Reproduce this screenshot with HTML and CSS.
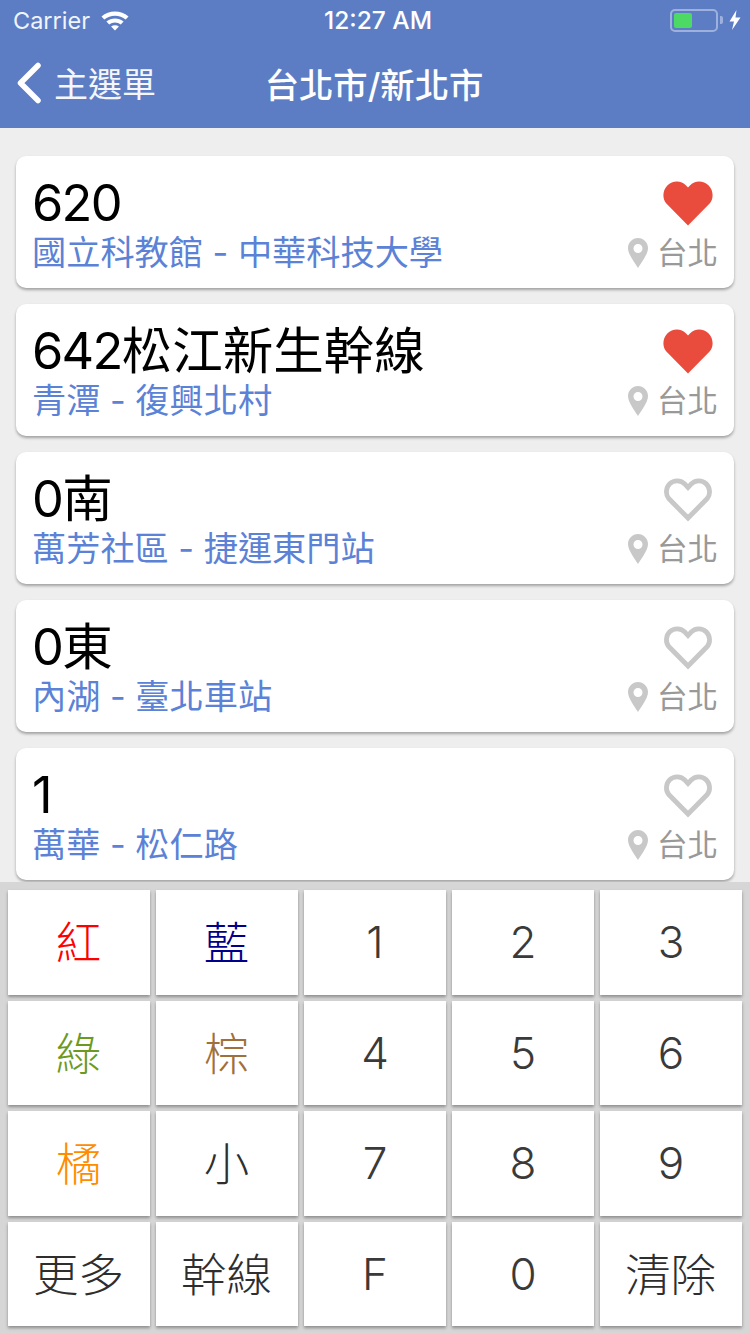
FILE: index.html
```html
<!DOCTYPE html>
<html lang="zh-Hant">
<head>
<meta charset="utf-8">
<title>台北市/新北市</title>
<link rel="stylesheet" href="styles.css">
</head>
<body>
<div class="app">
  <header class="header">
    <div class="status">
      <div class="status-left">
        <span class="carrier">Carrier</span>
        <svg class="wifi" width="30" height="22" viewBox="0 0 30 22"><path d="M1.5 7.6C8.9.9 21.1.9 28.5 7.6l-2.8 3C19.9 5.5 10.100 5.500 4.300 10.600z" fill="#fff"/><path d="M6.400 12.600c4.900-4.300 12.300-4.300 17.200 0l-2.800 3c-3.300-2.700-8.300-2.700-11.600 0z" fill="#fff"/><path d="M11.100 17.600c2.300-1.800 5.500-1.800 7.800 0L15 21.600z" fill="#fff"/></svg>
      </div>
      <span class="clock">12:27 AM</span>
      <div class="status-right">
        <div class="battery"><div class="battery-fill"></div></div>
        <div class="battery-tip"></div>
        <svg class="bolt" width="12" height="20" viewBox="0 0 12 20"><path d="M7.500 0L0.500 11.500H5L3 20l8.500-12.500H6.500z" fill="#fff"/></svg>
      </div>
    </div>
    <nav class="nav">
      <div class="back">
        <svg class="chevron" width="26" height="42" viewBox="0 0 26 42"><path d="M22 3.500L4.500 21 22 38.500" fill="none" stroke="#fff" stroke-width="5.500" stroke-linecap="round" stroke-linejoin="round"/></svg>
        <span class="back-label">主選單</span>
      </div>
      <h1 class="title">台北市/新北市</h1>
    </nav>
  </header>

  <main class="list">
    <article class="card">
      <div class="info"><div class="route"><span class="num">620</span></div><div class="stops">國立科教館 - 中華科技大學</div></div>
      <div class="meta">
        <svg class="heart" viewBox="0 0 52 46" preserveAspectRatio="none"><path class="heart-on" d="M26 45.500L3.500 23C-1 18-.5 9.500 4.500 4.500 10-.8 19-.8 24 4.500l2 2.200 2-2.200C33-.8 42-.8 47.500 4.500c5 5 5.500 13.500 1 18.500z"/></svg>
        <div class="area"><svg class="pin" width="20" height="30" viewBox="0 0 20 30"><path fill-rule="evenodd" d="M10 0C4.500 0 0 4.500 0 10c0 6.500 7 15 10 20 3-5 10-13.500 10-20C20 4.500 15.500 0 10 0zm0 6a4.500 4.500 0 1 1 0 9 4.500 4.500 0 0 1 0-9z" fill="#c8c8c8"/></svg><span>台北</span></div>
      </div>
    </article>
    <article class="card">
      <div class="info"><div class="route"><span class="num">642</span>松江新生幹線</div><div class="stops">青潭 - 復興北村</div></div>
      <div class="meta">
        <svg class="heart" viewBox="0 0 52 46" preserveAspectRatio="none"><path class="heart-on" d="M26 45.500L3.500 23C-1 18-.5 9.500 4.500 4.500 10-.8 19-.8 24 4.500l2 2.200 2-2.200C33-.8 42-.8 47.500 4.500c5 5 5.500 13.500 1 18.500z"/></svg>
        <div class="area"><svg class="pin" width="20" height="30" viewBox="0 0 20 30"><path fill-rule="evenodd" d="M10 0C4.500 0 0 4.500 0 10c0 6.500 7 15 10 20 3-5 10-13.500 10-20C20 4.500 15.500 0 10 0zm0 6a4.500 4.500 0 1 1 0 9 4.500 4.500 0 0 1 0-9z" fill="#c8c8c8"/></svg><span>台北</span></div>
      </div>
    </article>
    <article class="card">
      <div class="info"><div class="route"><span class="num">0</span>南</div><div class="stops">萬芳社區 - 捷運東門站</div></div>
      <div class="meta">
        <svg class="heart" viewBox="0 0 52 46" preserveAspectRatio="none"><path class="heart-off" d="M26 42L6 22C2.500 18 2.800 11 7 7c4.500-4.200 11.500-4 16 .5l3 3.200 3-3.200c4.500-4.500 11.500-4.700 16-.5 4.200 4 4.500 11 1 15z"/></svg>
        <div class="area"><svg class="pin" width="20" height="30" viewBox="0 0 20 30"><path fill-rule="evenodd" d="M10 0C4.500 0 0 4.500 0 10c0 6.500 7 15 10 20 3-5 10-13.500 10-20C20 4.500 15.500 0 10 0zm0 6a4.500 4.500 0 1 1 0 9 4.500 4.500 0 0 1 0-9z" fill="#c8c8c8"/></svg><span>台北</span></div>
      </div>
    </article>
    <article class="card">
      <div class="info"><div class="route"><span class="num">0</span>東</div><div class="stops">內湖 - 臺北車站</div></div>
      <div class="meta">
        <svg class="heart" viewBox="0 0 52 46" preserveAspectRatio="none"><path class="heart-off" d="M26 42L6 22C2.500 18 2.800 11 7 7c4.500-4.200 11.500-4 16 .5l3 3.200 3-3.200c4.500-4.500 11.500-4.700 16-.5 4.200 4 4.500 11 1 15z"/></svg>
        <div class="area"><svg class="pin" width="20" height="30" viewBox="0 0 20 30"><path fill-rule="evenodd" d="M10 0C4.500 0 0 4.500 0 10c0 6.500 7 15 10 20 3-5 10-13.500 10-20C20 4.500 15.500 0 10 0zm0 6a4.500 4.500 0 1 1 0 9 4.500 4.500 0 0 1 0-9z" fill="#c8c8c8"/></svg><span>台北</span></div>
      </div>
    </article>
    <article class="card">
      <div class="info"><div class="route"><span class="num">1</span></div><div class="stops">萬華 - 松仁路</div></div>
      <div class="meta">
        <svg class="heart" viewBox="0 0 52 46" preserveAspectRatio="none"><path class="heart-off" d="M26 42L6 22C2.500 18 2.800 11 7 7c4.500-4.200 11.500-4 16 .5l3 3.200 3-3.200c4.500-4.500 11.500-4.700 16-.5 4.200 4 4.500 11 1 15z"/></svg>
        <div class="area"><svg class="pin" width="20" height="30" viewBox="0 0 20 30"><path fill-rule="evenodd" d="M10 0C4.500 0 0 4.500 0 10c0 6.500 7 15 10 20 3-5 10-13.500 10-20C20 4.500 15.500 0 10 0zm0 6a4.500 4.500 0 1 1 0 9 4.500 4.500 0 0 1 0-9z" fill="#c8c8c8"/></svg><span>台北</span></div>
      </div>
    </article>
  </main>

  <section class="keypad">
    <button class="key cjk red"><span class="lift">紅</span></button>
    <button class="key cjk blue"><span class="lift">藍</span></button>
    <button class="key">1</button>
    <button class="key">2</button>
    <button class="key">3</button>
    <button class="key cjk green"><span class="lift">綠</span></button>
    <button class="key cjk brown"><span class="lift">棕</span></button>
    <button class="key">4</button>
    <button class="key">5</button>
    <button class="key">6</button>
    <button class="key cjk orange"><span class="lift">橘</span></button>
    <button class="key cjk"><span class="lift">小</span></button>
    <button class="key">7</button>
    <button class="key">8</button>
    <button class="key">9</button>
    <button class="key cjk"><span class="lift">更多</span></button>
    <button class="key cjk"><span class="lift">幹線</span></button>
    <button class="key">F</button>
    <button class="key">0</button>
    <button class="key cjk"><span class="lift">清除</span></button>
  </section>
</div>
</body>
</html>
```

FILE: styles.css
```css
* { box-sizing: border-box; margin: 0; padding: 0; }
html, body { width: 750px; height: 1334px; overflow: hidden; }
body { font-family: "Inter", "Noto Sans CJK TC", sans-serif; background: #eeeeee; }
.app { width: 750px; height: 1334px; display: flex; flex-direction: column; }

.header { height: 128px; background: #5c7dc4; color: #fff; flex: none; }
.status { height: 40px; display: flex; align-items: center; justify-content: space-between; position: relative; padding: 0 9px 0 13px; }
.status-left { display: flex; align-items: center; gap: 10px; }
.carrier { font-size: 23.5px; font-family: "Inter", sans-serif; color: #f2f4fa; }
.wifi { margin-top: -1px; }
.clock { position: absolute; left: 6px; right: 0; text-align: center; font-size: 24.500px; font-weight: 500; }
.status-right { display: flex; align-items: center; }
.battery { width: 48px; height: 23px; border: 2px solid #9db1dc; border-radius: 5px; padding: 2px; }
.battery-fill { width: 18px; height: 100%; background: #4cd964; border-radius: 2px; }
.battery-tip { width: 3px; height: 8px; background: #9db1dc; border-radius: 0 2px 2px 0; margin: 0 6px 0 2px; }
.nav { height: 88px; display: flex; align-items: center; position: relative; padding: 0 0 3px 16px; }
.back { display: flex; align-items: center; gap: 12px; }
.chevron { flex: none; }
.back-label { font-size: 34px; color: #f4f6fb; }
.title { position: absolute; left: -2px; right: 0; text-align: center; font-size: 34.300px; font-weight: 500; }

.list { flex: 1; min-height: 0; padding: 28px 16px 0; display: flex; flex-direction: column; gap: 16px; overflow: hidden; }
.card { height: 132px; flex: none; background: #fff; border-radius: 10px; box-shadow: 0 2px 3px rgba(0,0,0,.32); display: flex; justify-content: space-between; padding: 0 16px 0 16px; }
.info { display: flex; flex-direction: column; padding-top: 18px; }
.route { font-size: 50.500px; line-height: 58px; color: #000; }
.num { letter-spacing: -1.700px; }
.stops { font-size: 34.200px; line-height: 40px; color: #5b82d6; padding-top: 1px; }
.meta { display: flex; flex-direction: column; align-items: flex-end; padding-top: 25px; }
.heart { width: 50px; height: 45px; margin: 0 5px 1px 0; }
.heart-on { fill: #e94b3c; }
.heart-off { fill: none; stroke: #c8c8c8; stroke-width: 5; }
.area { display: flex; align-items: center; gap: 9px; margin-top: 6px; font-size: 30.500px; line-height: 40px; color: #999999; }

.keypad { flex: none; height: 452px; background: #d6d6d6; padding: 8px 8px 8px; display: grid; grid-template-columns: repeat(5, 142px); grid-template-rows: repeat(4, 1fr); gap: 6px; }
.key { background: #fff; border: 0; box-shadow: 0 2px 3px rgba(0,0,0,.35); font-family: "Inter", "Noto Sans CJK TC", sans-serif; font-size: 44px; color: #3a3a3a; font-weight: 300; }
.cjk { font-size: 45.500px; color: #2e2e2e; }
.lift { display: block; margin-top: -4px; margin-left: -1px; }
.red { color: #ff0000; }
.blue { color: #00008b; }
.green { color: #6b9a1f; }
.brown { color: #a0703c; }
.orange { color: #ff8c00; }
```
